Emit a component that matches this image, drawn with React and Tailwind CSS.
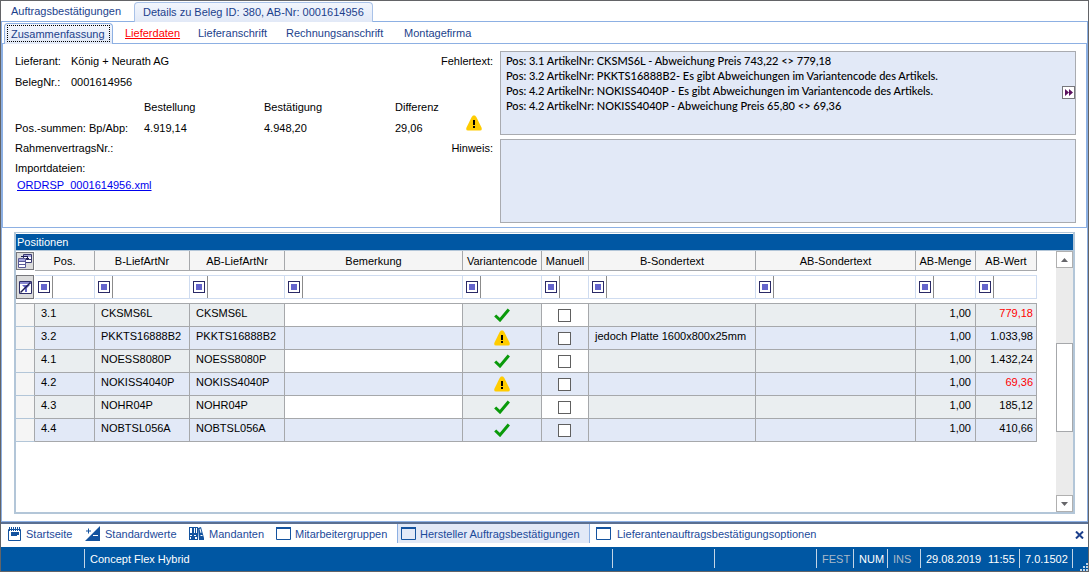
import React, { useState } from "react";

const columns = [
  { key: "pos", label: "Pos.", width: "w-[60px]" },
  { key: "bArt", label: "B-LiefArtNr", width: "w-[95px]" },
  { key: "abArt", label: "AB-LiefArtNr", width: "w-[95px]" },
  { key: "note", label: "Bemerkung", width: "" },
  { key: "variant", label: "Variantencode", width: "w-[79px]" },
  { key: "manual", label: "Manuell", width: "w-[47px]" },
  { key: "bText", label: "B-Sondertext", width: "w-[167px]" },
  { key: "abText", label: "AB-Sondertext", width: "w-[160px]" },
  { key: "amount", label: "AB-Menge", width: "w-[60px]" },
  { key: "value", label: "AB-Wert", width: "w-[61px]" },
];

const positions = [
  { pos: "3.1", art: "CKSMS6L", ok: true, text: "", amount: "1,00", value: "779,18", red: true },
  { pos: "3.2", art: "PKKTS16888B2", ok: false, text: "jedoch Platte 1600x800x25mm", amount: "1,00", value: "1.033,98" },
  { pos: "4.1", art: "NOESS8080P", ok: true, text: "", amount: "1,00", value: "1.432,24" },
  { pos: "4.2", art: "NOKISS4040P", ok: false, text: "", amount: "1,00", value: "69,36", red: true },
  { pos: "4.3", art: "NOHR04P", ok: true, text: "", amount: "1,00", value: "185,12" },
  { pos: "4.4", art: "NOBTSL056A", ok: true, text: "", amount: "1,00", value: "410,66" },
];

const errorText = [
  "Pos: 3.1 ArtikelNr: CKSMS6L - Abweichung Preis 743,22 <> 779,18",
  "Pos: 3.2 ArtikelNr: PKKTS16888B2- Es gibt Abweichungen im Variantencode des Artikels.",
  "Pos: 4.2 ArtikelNr: NOKISS4040P - Es gibt Abweichungen im Variantencode des Artikels.",
  "Pos: 4.2 ArtikelNr: NOKISS4040P - Abweichung Preis 65,80 <> 69,36",
].join("\n");

const Warning = () => (
  <svg width="16" height="16" viewBox="0 0 16 16" className="block">
    <path d="M7 0.5h2l1.3 1.6 5.2 10.4q1 2.8-1.5 3H2q-2.500-.2-1.500-3L5.700 2.100z" fill="#ffcc00" />
    <path d="M7 5h2v5H7zM7 11h2v2H7z" fill="#000" />
  </svg>
);

const Check = () => (
  <svg width="16" height="14" viewBox="0 0 16 14" className="block">
    <path d="M1.200 7.500L6 12 14.800 1.500" fill="none" stroke="#0a9a0a" strokeWidth="3" />
  </svg>
);

const WindowIcon = () => (
  <svg width="15" height="13" viewBox="0 0 15 13">
    <path d="M.5.5h14v12H.5z" fill="none" stroke="#14539f" />
    <path d="M0 0h15v2H0z" fill="#14539f" />
  </svg>
);

const StartIcon = () => (
  <svg width="13" height="14" viewBox="0 0 13 14">
    <path d="M.5 2.500h12v11H.5z" fill="#fff" stroke="#14539f" />
    <path d="M1 0h1v4H1zM3 0h1v4H3zM5 0h1v4H5zM7 0h1v4H7zM9 0h1v4H9zM11 0h1v4h-1zM3 5h8v3H9v1H3z" fill="#14539f" />
  </svg>
);

const DefaultsIcon = () => (
  <svg width="15" height="15" viewBox="0 0 15 15">
    <path d="M15 0v15H0z" fill="#14539f" />
    <path d="M1 5h5M3.500 2.500v5" stroke="#14539f" fill="none" />
    <path d="M8 9.500h5" stroke="#fff" fill="none" />
  </svg>
);

const ClientsIcon = () => (
  <svg width="15" height="13" viewBox="0 0 15 13">
    <path d="M0 0h4v13H0zM4 0h5v13H4zM9 1l3-1 3 11v2h-5z" fill="#14539f" />
    <path d="M1 1h2v5H1zM5 1h1v5H5zM7 1h1v5H7zM1 8h2v1H1zM5 8h2v1H5zM1 10h1v2H1zM6 10h2v2H6zM10.500 2l1-.4 1 4-1 .4zM11.500 8h2v1h-2z" fill="#fff" />
  </svg>
);

const ColumnIcon = () => (
  <svg width="16" height="16" viewBox="0 0 16 16">
    <path d="M6.500 1.500h8v8h-8z" fill="#fff" stroke="#3a3a72" />
    <path d="M7 2h7v2H7z" fill="#a6a6de" />
    <path d="M7 6.500h7" stroke="#3a3a72" />
    <path d="M1.500 5.500h7v9h-7z" fill="#fff" stroke="#5a5a98" />
    <path d="M2 6h6v2H2z" fill="#a6a6de" />
    <path d="M2 8.500h6M2 11.500h6" stroke="#5a5a98" />
    <path d="M4 3.500h7M10.500 3v4M9 5.500h3" stroke="#1c1c50" fill="none" />
  </svg>
);

const ClearFilterIcon = () => (
  <svg width="13" height="13" viewBox="0 0 13 13">
    <path d="M.5.5h12v12H.5z" fill="#fff" stroke="#2e2e68" />
    <path d="M1 1h11v2H1z" fill="#8a8ad0" />
    <path d="M3 4h8L8 7v4H6V7z" fill="#6868c8" />
    <path d="M1.500 11.500l10-10" stroke="#1c1c50" strokeWidth="1.500" />
  </svg>
);

const Details = () => (
  <div className="flex border-b border-x border-[#8db0e3] pl-3 pr-[10px] pb-[4px]">
    <div className="w-[430px] shrink-0 pt-[6px]">
      <div className="flex h-[21px] items-center">
        <span className="w-14">Lieferant:</span>
        <span>König + Neurath AG</span>
      </div>
      <div className="flex h-[21px] items-center">
        <span className="w-14">BelegNr.:</span>
        <span>0001614956</span>
      </div>
      <table className="mt-[5px]">
        <thead>
          <tr className="h-5 text-left">
            <td className="w-[129px] p-0"></td>
            <th className="w-[120px] p-0 font-normal">Bestellung</th>
            <th className="w-[131px] p-0 font-normal">Bestätigung</th>
            <th className="w-[50px] p-0 font-normal">Differenz</th>
          </tr>
        </thead>
        <tbody>
          <tr className="h-[21px] text-left">
            <th className="p-0 font-normal">Pos.-summen: Bp/Abp:</th>
            <td className="p-0">4.919,14</td>
            <td className="p-0">4.948,20</td>
            <td className="p-0">29,06</td>
          </tr>
        </tbody>
      </table>
      <div className="flex h-5 items-center">RahmenvertragsNr.:</div>
      <div className="flex h-5 items-center">Importdateien:</div>
      <a href="#xml" className="ml-[2px] block w-fit text-[#0000ee] underline">
        ORDRSP_0001614956.xml
      </a>
    </div>

    <div className="flex w-12 shrink-0 flex-col items-end pt-[6px]">
      <label htmlFor="fehler" className="flex h-[21px] items-center">Fehlertext:</label>
      <div className="mr-[11px] mt-11">
        <Warning />
      </div>
      <label htmlFor="hinweis" className="mt-[7px] flex h-5 items-center">Hinweis:</label>
    </div>

    <div className="ml-[7px] flex min-w-0 flex-1 flex-col gap-[4px] pt-[7px]">
      <div className="relative">
        <textarea
          id="fehler"
          readOnly
          defaultValue={errorText}
          className="block h-[84px] w-full resize-none border border-[#a9abb0] bg-[#e2e9f7] px-[5px] py-px font-[Lato,sans-serif] text-[11px] font-medium leading-[15px] text-black outline-none"
        />
        <button
          aria-label="Fehlertext öffnen"
          className="absolute right-px top-[35px] flex h-[13px] w-[13px] items-center justify-center border border-[#77777c] bg-white"
        >
          <svg width="8" height="7" viewBox="0 0 8 7">
            <path d="M0 0l4 3.500L0 7zM4 0l4 3.500L4 7z" fill="#5c1260" />
          </svg>
        </button>
      </div>
      <textarea
        id="hinweis"
        readOnly
        className="block h-[84px] w-full resize-none border border-[#a9abb0] bg-[#e2e9f7] px-[5px] py-px outline-none"
      />
    </div>
  </div>
);

const Positions = () => {
  const line = "border-r border-b border-[#a6a8ab] p-0";
  const cell = line + " px-[6px] pt-[2px] align-top";

  return (
    <section className="mx-3 mb-[7px] mt-[4px] flex flex-1 flex-col border-t border-x-2 border-b-2 border-[#b3c6d8] pt-px">
      <h2 className="h-4 bg-[#0057a3] pl-px leading-4 text-white">Positionen</h2>
      <div className="flex flex-1 border-t border-[#b3c6d8]">
        <div className="min-w-0 flex-1">
          <table className="w-full table-fixed border-separate border-spacing-0">
            <colgroup>
              <col className="w-[19px]" />
              {columns.map((c) => (
                <col key={c.key} className={c.width} />
              ))}
            </colgroup>
            <thead>
              <tr className="h-5">
                <td className="p-0">
                  <button
                    aria-label="Spaltenauswahl"
                    className="flex h-[18px] w-[18px] items-center justify-center border border-[#77777c] bg-[#dcdcdc]"
                  >
                    <ColumnIcon />
                  </button>
                </td>
                {columns.map((c) => (
                  <th key={c.key} className={line + " bg-[#f5f5f5] text-center font-normal"}>
                    {c.label}
                  </th>
                ))}
              </tr>
              <tr className="h-1">
                <td colSpan={11} className="p-0"></td>
              </tr>
              <tr className="h-6">
                <td className="p-0">
                  <button
                    aria-label="Filter löschen"
                    className="flex h-6 w-[18px] items-center justify-center border border-[#77777c] bg-[#dcdcdc]"
                  >
                    <ClearFilterIcon />
                  </button>
                </td>
                {columns.map((c) => (
                  <td key={c.key} className="border-y border-r border-[#cfdcf0] p-0">
                    <div className="flex h-[22px]">
                      <div className="flex w-[18px] shrink-0 items-center justify-center border-r border-[#8c8c8c]">
                        <button
                          aria-label={"Filter " + c.label}
                          className="flex h-3 w-3 items-center justify-center border border-[#2a2a66] bg-white"
                        >
                          <span className="h-[6px] w-[6px] bg-[#6464cc]"></span>
                        </button>
                      </div>
                      <input aria-label={c.label} className="min-w-0 flex-1 px-1 outline-none" />
                    </div>
                  </td>
                ))}
              </tr>
              <tr className="h-[5px]">
                <td colSpan={11} className="border-b border-[#a6a8ab] p-0"></td>
              </tr>
            </thead>
            <tbody>
              {positions.map((p, i) => {
                const edit = i % 2 === 0 ? " bg-white" : "";
                return (
                  <tr key={p.pos} className={i % 2 === 0 ? "h-[23px] bg-[#eaeef0]" : "h-[23px] bg-[#e2e9f7]"}>
                    <td className="border-b border-r border-b-[#b3c6d8] border-r-[#a6a8ab] bg-[#f5f5f5] p-0"></td>
                    <td className={cell}>{p.pos}</td>
                    <td className={cell}>{p.art}</td>
                    <td className={cell}>{p.art}</td>
                    <td className={cell + edit}></td>
                    <td className={line}>
                      <div className="flex justify-center">{p.ok ? <Check /> : <Warning />}</div>
                    </td>
                    <td className={line + edit}>
                      <input
                        type="checkbox"
                        aria-label={"Manuell " + p.pos}
                        className="ml-4 block h-[13px] w-[13px] appearance-none border border-[#606060] bg-white"
                      />
                    </td>
                    <td className={cell}>{p.text}</td>
                    <td className={cell}></td>
                    <td className={line + " pr-[4px] pt-[2px] text-right align-top"}>{p.amount}</td>
                    <td className={line + " pr-[3px] pt-[2px] text-right align-top" + (p.red ? " text-[#ff0000]" : "")}>
                      {p.value}
                    </td>
                  </tr>
                );
              })}
            </tbody>
          </table>
        </div>

        <div className="ml-[19px] flex w-[17px] flex-col bg-[#ebebeb]">
          <button aria-label="Nach oben" className="flex h-[17px] items-center justify-center border border-[#b0b0b0] bg-white">
            <svg width="7" height="4" viewBox="0 0 7 4">
              <path d="M0 4l3.500-4L7 4z" fill="#66666a" />
            </svg>
          </button>
          <div className="flex-1"></div>
          <div className="h-[89px] border border-[#a6a8ab] bg-white"></div>
          <div className="h-[63px]"></div>
          <button aria-label="Nach unten" className="flex h-[17px] items-center justify-center border border-[#b0b0b0] bg-white">
            <svg width="7" height="4" viewBox="0 0 7 4">
              <path d="M0 0h7L3.500 4z" fill="#66666a" />
            </svg>
          </button>
        </div>
      </div>
    </section>
  );
};

const App = () => {
  const [tab, setTab] = useState("Zusammenfassung");

  return (
    <div className="flex min-h-screen w-full flex-col border border-[#636467] bg-white font-['Liberation_Sans',Arial,sans-serif] text-[11px] leading-[14px] text-black">
      <nav className="flex h-[21px] items-stretch border-b border-[#8db0e3] text-[#1c3f8c]">
        <button className="w-[133px] pl-[10px] text-left">Auftragsbestätigungen</button>
        <button className="-mb-px mt-px w-[239px] rounded-t-sm border-x border-t border-[#a9c2e8] bg-linear-to-b from-[#f2f6fd] to-[#e2e9f7] pb-[2px] pl-2 text-left">
          Details zu Beleg ID: 380, AB-Nr: 0001614956
        </button>
      </nav>

      <main className="flex flex-1 flex-col border-x border-b border-[#8db0e3]">
        <nav className="flex h-[22px] items-stretch border-b border-[#8db0e3] pl-[2px] text-[#1c3f8c]">
          <button
            onClick={() => setTab("Zusammenfassung")}
            className="-mb-px mt-px w-[109px] rounded-t-sm border-x border-t border-[#8db0e3] bg-linear-to-b from-[#f2f6fd] to-[#e2e9f7] px-[2px] pb-[2px] pt-px"
          >
            <span className="flex h-full items-center border border-dotted border-black pl-[3px]">{tab}</span>
          </button>
          <button className="w-[74px] pl-3 text-left text-[#ff0000] underline">Lieferdaten</button>
          <button className="w-[89px] pl-[11px] text-left">Lieferanschrift</button>
          <button className="w-[117px] pl-[10px] text-left">Rechnungsanschrift</button>
          <button className="pl-[11px] text-left">Montagefirma</button>
        </nav>
        <Details />
        <Positions />
      </main>

      <nav className="flex h-[25px] items-stretch border-t-2 border-[#5a6f92] pb-[4px] text-[#1c4a9a]">
        <button className="flex w-[77px] items-center gap-[5px] pl-[7px]">
          <StartIcon />
          Startseite
        </button>
        <button className="flex w-[104px] items-center gap-[5px] pl-[7px]">
          <DefaultsIcon />
          Standardwerte
        </button>
        <button className="flex w-[87px] items-center gap-[5px] pl-[7px]">
          <ClientsIcon />
          Mandanten
        </button>
        <button className="flex w-[128px] items-center gap-[4px] pl-[7px]">
          <WindowIcon />
          Mitarbeitergruppen
        </button>
        <button className="flex w-[193px] items-center gap-[4px] border-x border-[#8db0e3] bg-[#e2e9f7] pl-[3px]">
          <WindowIcon />
          Hersteller Auftragsbestätigungen
        </button>
        <button className="flex items-center gap-[6px] pl-[6px]">
          <WindowIcon />
          Lieferantenauftragsbestätigungsoptionen
        </button>
        <button aria-label="Schließen" className="ml-auto pr-1 pt-[3px]">
          <svg width="9" height="8" viewBox="0 0 9 8">
            <path d="M1 .5l7 7M8 .5l-7 7" stroke="#1c3f8c" strokeWidth="2" />
          </svg>
        </button>
      </nav>

      <footer className="flex h-6 items-stretch bg-[#0057a3] pb-[3px] pt-[2px] text-white">
        <div className="w-[84px] border-r border-[#c3d5e6]"></div>
        <div className="flex flex-1 items-center border-r border-[#c3d5e6] pl-[5px]">Concept Flex Hybrid</div>
        <div className="w-[102px] border-r border-[#c3d5e6]"></div>
        <div className="w-[102px] border-r border-[#c3d5e6]"></div>
        <div className="flex w-[37px] items-center border-r border-[#c3d5e6] pl-[5px] text-[#a9b9c9]">FEST</div>
        <div className="flex w-[34px] items-center border-r border-[#c3d5e6] pl-[5px]">NUM</div>
        <div className="flex w-[33px] items-center border-r border-[#c3d5e6] pl-[5px] text-[#a9b9c9]">INS</div>
        <div className="flex w-[99px] items-center gap-[7px] border-r border-[#c3d5e6] pl-[5px]">
          <span>29.08.2019</span>
          <span>11:55</span>
        </div>
        <div className="flex w-[53px] items-center border-r border-[#c3d5e6] pl-[5px]">7.0.1502</div>
        <div className="-mb-[3px] flex w-[15px] items-end justify-end">
          <svg width="8" height="8" viewBox="0 0 8 8">
            <path d="M6 0h2v2H6zM3 3h2v2H3zM6 3h2v2H6zM0 6h2v2H0zM3 6h2v2H3zM6 6h2v2H6z" fill="#c3d5e6" />
          </svg>
        </div>
      </footer>
    </div>
  );
};

export default App;
